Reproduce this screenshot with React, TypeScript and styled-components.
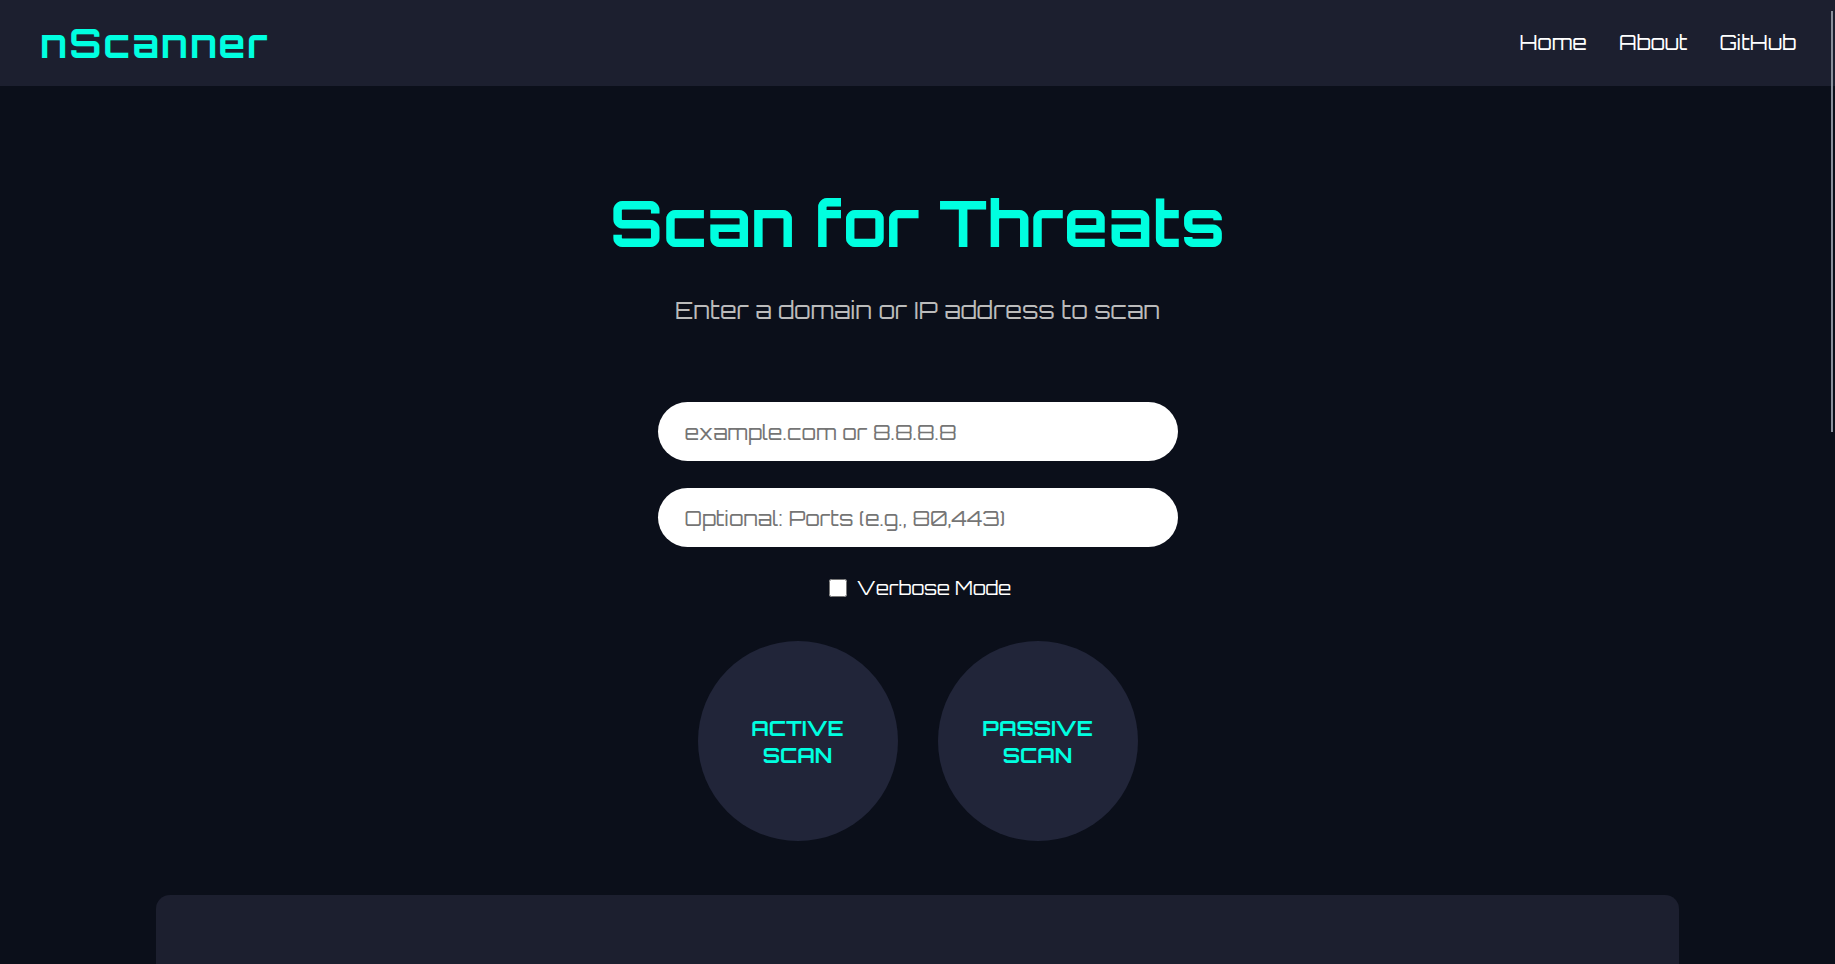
import React from "react";
import styled, { createGlobalStyle } from "styled-components";

const color = {
  page: "#0b0f1a",
  surface: "#1c1f2f",
  button: "#212539",
  accent: "#00ffe0",
  text: "#ffffff",
  muted: "#bbbbbb",
};

const GlobalStyle = createGlobalStyle`
  * { box-sizing: border-box; }
  body {
    margin: 0;
    background: ${color.page};
    color: ${color.text};
    font-family: Orbitron, "DejaVu Sans", sans-serif;
  }
  input, button { font-family: inherit; }
`;

const Page = styled.div`
  height: 100vh;
  overflow-y: auto;
  scrollbar-width: none;
`;

const ScrollThumb = styled.div`
  position: fixed;
  top: 11px;
  right: 2px;
  width: 2px;
  height: 421px;
  background: #8b909c;
`;

const Header = styled.header`
  display: flex;
  align-items: center;
  justify-content: space-between;
  height: 86px;
  padding: 0 39px 0 40px;
  background: ${color.surface};
`;

const Logo = styled.div`
  color: ${color.accent};
  font-size: 39px;
  line-height: 48px;
  font-weight: 700;
  letter-spacing: 2px;
`;

const Nav = styled.nav`
  display: flex;
  gap: 32px;
  padding-bottom: 2px;
`;

const NavLink = styled.a`
  color: ${color.text};
  font-size: 21px;
  line-height: 28px;
  text-decoration: none;
`;

const Main = styled.main`
  display: flex;
  flex-direction: column;
  align-items: center;
  padding: 97px 0 64px;
`;

const Title = styled.h1`
  margin: 0;
  color: ${color.accent};
  font-size: 64px;
  line-height: 80px;
  font-weight: 700;
`;

const Subtitle = styled.p`
  margin: 31px 0 76px;
  color: ${color.muted};
  font-size: 24px;
  line-height: 32px;
`;

const ScanForm = styled.form`
  display: flex;
  flex-direction: column;
  align-items: center;
  width: 100%;
`;

const Field = styled.input`
  width: 520px;
  max-width: 90%;
  height: 59px;
  margin-bottom: 27px;
  padding: 0 27px;
  border: none;
  border-radius: 30px;
  background: #ffffff;
  color: #111111;
  font-size: 21px;

  &::placeholder { color: #757575; }
`;

const CheckRow = styled.label`
  display: flex;
  align-items: center;
  gap: 10px;
  height: 28px;
  padding-left: 5px;
  font-size: 19px;
  line-height: 28px;
`;

const Checkbox = styled.input`
  width: 18px;
  height: 18px;
  margin: 0;
`;

const Actions = styled.div`
  display: flex;
  gap: 40px;
  margin: 39px 0 54px;
`;

const ScanButton = styled.button`
  width: 200px;
  height: 200px;
  padding: 2px 40px 0;
  border: none;
  border-radius: 50%;
  background: ${color.button};
  color: ${color.accent};
  font-size: 21px;
  line-height: 27px;
  font-weight: 700;
  cursor: pointer;
`;

const Results = styled.section`
  width: 83%;
  min-height: 480px;
  border-radius: 14px;
  background: ${color.surface};
`;

const links = ["Home", "About", "GitHub"];
const fields = [
  { name: "target", label: "Target", placeholder: "example.com or 8.8.8.8" },
  { name: "ports", label: "Ports", placeholder: "Optional: Ports (e.g., 80,443)" },
];
const scans = ["ACTIVE SCAN", "PASSIVE SCAN"];

export default function App() {
  return (
    <>
      <GlobalStyle />
      <Page>
        <Header>
          <Logo>nScanner</Logo>
          <Nav>
            {links.map((label) => (
              <NavLink key={label} href={`#${label.toLowerCase()}`}>
                {label}
              </NavLink>
            ))}
          </Nav>
        </Header>
        <Main>
          <Title>Scan for Threats</Title>
          <Subtitle>Enter a domain or IP address to scan</Subtitle>
          <ScanForm onSubmit={(event) => event.preventDefault()}>
            {fields.map((field) => (
              <Field
                key={field.name}
                type="text"
                name={field.name}
                aria-label={field.label}
                placeholder={field.placeholder}
              />
            ))}
            <CheckRow htmlFor="verbose">
              <Checkbox type="checkbox" id="verbose" />
              Verbose Mode
            </CheckRow>
            <Actions>
              {scans.map((label) => (
                <ScanButton key={label} type="submit">
                  {label}
                </ScanButton>
              ))}
            </Actions>
          </ScanForm>
          <Results aria-label="Scan results" />
        </Main>
      </Page>
      <ScrollThumb />
    </>
  );
}
